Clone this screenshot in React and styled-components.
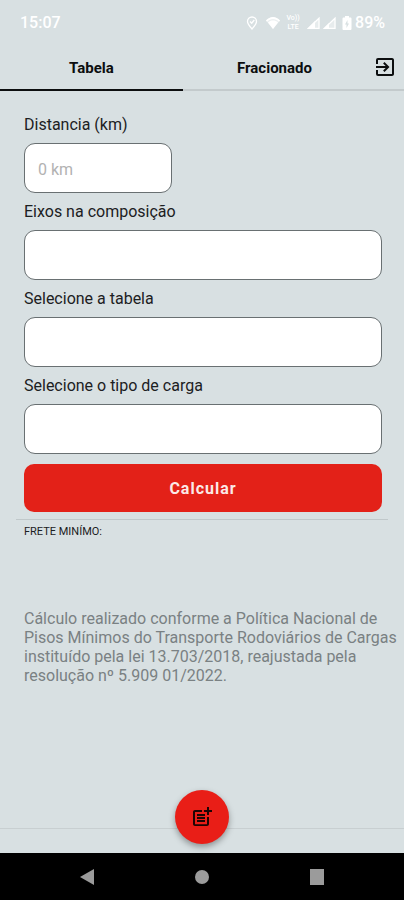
import { useState } from "react";
import styled, { createGlobalStyle } from "styled-components";
import { MdExitToApp, MdPostAdd } from "react-icons/md";

const GlobalStyle = createGlobalStyle`
  * {
    box-sizing: border-box;
  }
  body {
    margin: 0;
    background-color: #d8e0e2;
    color: #1c2022;
    font-family: Roboto, "Liberation Sans", sans-serif;
  }
`;

const Screen = styled.div`
  display: flex;
  flex-direction: column;
  min-height: 100vh;
`;

const StatusBar = styled.header`
  display: flex;
  align-items: center;
  justify-content: space-between;
  height: 45px;
  padding: 0 19px 0 20px;
  color: white;
  font-size: 16px;
  font-weight: 500;
`;
const StatusIcons = styled.div`
  display: flex;
  align-items: center;
  svg {
    display: block;
  }
`;
const StatusIcon = styled.svg`
  width: ${(props) => props.$width}px;
  height: 14px;
  margin-right: ${(props) => props.$gap}px;
`;
const Volte = styled.span`
  display: flex;
  flex-direction: column;
  align-items: center;
  width: 16px;
  margin-right: 6px;
  font-size: 7px;
  line-height: 9px;
`;

const TabBar = styled.nav`
  display: flex;
  height: 46px;
`;
const Tab = styled.button`
  flex: 1;
  padding: 2px 0 0;
  border: none;
  border-bottom: 2px solid ${(props) => (props.$active ? "#0c0e0f" : "#c3cacc")};
  background: none;
  color: #0c0e0f;
  font-family: inherit;
  font-size: 15px;
  font-weight: 700;
  cursor: pointer;
`;
const ExitButton = styled.button`
  display: flex;
  align-items: center;
  justify-content: center;
  width: 38px;
  padding: 0;
  border: none;
  border-bottom: 2px solid #c3cacc;
  background: none;
  color: #0c0e0f;
  cursor: pointer;
`;

const Form = styled.form`
  display: flex;
  flex-direction: column;
  padding: 15px 22px 0 24px;
`;
const Field = styled.div`
  display: flex;
  flex-direction: column;
  align-items: flex-start;
`;
const Label = styled.label`
  font-size: 16px;
  line-height: 37px;
`;
const Input = styled.input`
  width: 148px;
  height: 50px;
  padding: 2px 13px 0;
  border: 1px solid #697072;
  border-radius: 11px;
  background-color: white;
  font-family: inherit;
  font-size: 16px;
  &::placeholder {
    color: #b2b2b2;
  }
`;
const Select = styled.select`
  appearance: none;
  width: 100%;
  height: 50px;
  padding: 0 13px;
  border: 1px solid #697072;
  border-radius: 11px;
  background-color: white;
  font-family: inherit;
  font-size: 16px;
`;
const Submit = styled.button`
  height: 48px;
  margin-top: 10px;
  border: none;
  border-radius: 10px;
  background-color: #e32118;
  color: #fbe9e7;
  font-family: inherit;
  font-size: 16px;
  font-weight: 700;
  letter-spacing: 1px;
  cursor: pointer;
`;

const Result = styled.section`
  margin: 7px 16px 0;
  padding: 5px 8px 0;
  border-top: 1px solid #c0c8ca;
  font-size: 11px;
  line-height: 14px;
`;
const Note = styled.p`
  margin: 70px 0 0;
  padding: 0 6px 0 24px;
  color: #7a8183;
  font-size: 16px;
  line-height: 19px;
`;

const BottomBar = styled.footer`
  display: flex;
  justify-content: center;
  height: 25px;
  margin-top: auto;
  border-top: 1px solid #c8cfd1;
`;
const AddButton = styled.button`
  display: flex;
  align-items: center;
  justify-content: center;
  width: 54px;
  height: 54px;
  margin-top: -39px;
  padding: 0;
  border: none;
  border-radius: 50%;
  background-color: #e91e17;
  box-shadow: 0 3px 6px rgba(0, 0, 0, 0.35);
  color: #1d0504;
  cursor: pointer;
`;

const SystemNav = styled.nav`
  display: flex;
  align-items: center;
  justify-content: space-between;
  height: 47px;
  padding: 0 75px;
  background-color: black;
  z-index: 1;
`;
const NavButton = styled.button`
  display: flex;
  padding: 4px;
  border: none;
  background: none;
  color: #9b9b9b;
  cursor: pointer;
`;

const selects = [
  { id: "eixos", label: "Eixos na composição" },
  { id: "tabela", label: "Selecione a tabela" },
  { id: "carga", label: "Selecione o tipo de carga" },
];

const tabs = ["Tabela", "Fracionado"];

const App = () => {
  const [tab, setTab] = useState("Tabela");
  const [distance, setDistance] = useState("");

  return (
    <Screen>
      <GlobalStyle />
      <StatusBar>
        <span>15:07</span>
        <StatusIcons>
          <StatusIcon $width={12} $gap={8} viewBox="0 0 12 14" fill="none" stroke="white">
            <path d="M6 13C3.800 10.500 1.500 8 1.500 5.500a4.500 4.500 0 0 1 9 0C10.500 8 8.200 10.500 6 13z" strokeWidth="1.300" />
            <path d="M4 5.500l1.700 1.700 2.600-3.200" strokeWidth="1.300" />
          </StatusIcon>
          <StatusIcon $width={14} $gap={5} viewBox="0 0 14 14" fill="white">
            <path d="M0 4.500C4-.2 10-.2 14 4.500L7 13z" opacity=".5" />
            <path d="M2 6.500c3-2.600 7-2.600 10 0L7 13z" />
            <path d="M0 4.500C4-.2 10-.2 14 4.500l-1 1.200c-3.500-3.600-8.500-3.600-12 0z" />
          </StatusIcon>
          <Volte>
            <span>Vo))</span>
            <span>LTE</span>
          </Volte>
          <StatusIcon $width={13} $gap={3} viewBox="0 0 13 14" fill="white">
            <path d="M0 13L12.500 1v12z" opacity=".4" />
            <path d="M0 13l8-8v8z" />
            <path d="M1.500 12.400L12 2.200v10.200z" fill="none" stroke="white" strokeWidth="1.200" />
          </StatusIcon>
          <StatusIcon $width={13} $gap={6} viewBox="0 0 13 14" fill="white">
            <path d="M0 13L12.500 1v12z" opacity=".4" />
            <path d="M0 13l6-6v6z" />
            <path d="M1.500 12.400L12 2.200v10.200z" fill="none" stroke="white" strokeWidth="1.200" />
          </StatusIcon>
          <StatusIcon $width={10} $gap={3} viewBox="0 0 10 14" fill="white">
            <path
              fillRule="evenodd"
              d="M3 0h4v1.500h1.500c.5 0 1 .5 1 1V13c0 .5-.5 1-1 1h-7c-.5 0-1-.5-1-1V2.500c0-.5.5-1 1-1H3zM5.500 4L3 8.500h1.500V12L7 7.500H5.500z"
            />
          </StatusIcon>
          <span>89%</span>
        </StatusIcons>
      </StatusBar>

      <TabBar>
        {tabs.map((name) => (
          <Tab key={name} type="button" $active={tab === name} onClick={() => setTab(name)}>
            {name}
          </Tab>
        ))}
        <ExitButton type="button" aria-label="Sair">
          <MdExitToApp size={24} />
        </ExitButton>
      </TabBar>

      <Form onSubmit={(e) => e.preventDefault()}>
        <Field>
          <Label htmlFor="distancia">Distancia (km)</Label>
          <Input
            id="distancia"
            inputMode="numeric"
            placeholder="0 km"
            value={distance}
            onChange={(e) => setDistance(e.target.value)}
          />
        </Field>
        {selects.map(({ id, label }) => (
          <Field key={id}>
            <Label htmlFor={id}>{label}</Label>
            <Select id={id} />
          </Field>
        ))}
        <Submit type="submit">Calcular</Submit>
      </Form>

      <Result>FRETE MINÍMO:</Result>
      <Note>
        Cálculo realizado conforme a Política Nacional de Pisos Mínimos do Transporte Rodoviários de
        Cargas instituído pela lei 13.703/2018, reajustada pela resolução nº 5.909 01/2022.
      </Note>

      <BottomBar>
        <AddButton type="button" aria-label="Adicionar">
          <MdPostAdd size={24} />
        </AddButton>
      </BottomBar>
      <SystemNav>
        <NavButton type="button" aria-label="Voltar">
          <svg width="16" height="16" viewBox="0 0 16 16" fill="currentColor">
            <path d="M15 0v16L1 8z" />
          </svg>
        </NavButton>
        <NavButton type="button" aria-label="Início">
          <svg width="16" height="16" viewBox="0 0 16 16" fill="currentColor">
            <circle cx="8" cy="8" r="7" />
          </svg>
        </NavButton>
        <NavButton type="button" aria-label="Recentes">
          <svg width="16" height="16" viewBox="0 0 16 16" fill="currentColor">
            <path d="M1 0h14v16H1z" />
          </svg>
        </NavButton>
      </SystemNav>
    </Screen>
  );
};

export default App;
